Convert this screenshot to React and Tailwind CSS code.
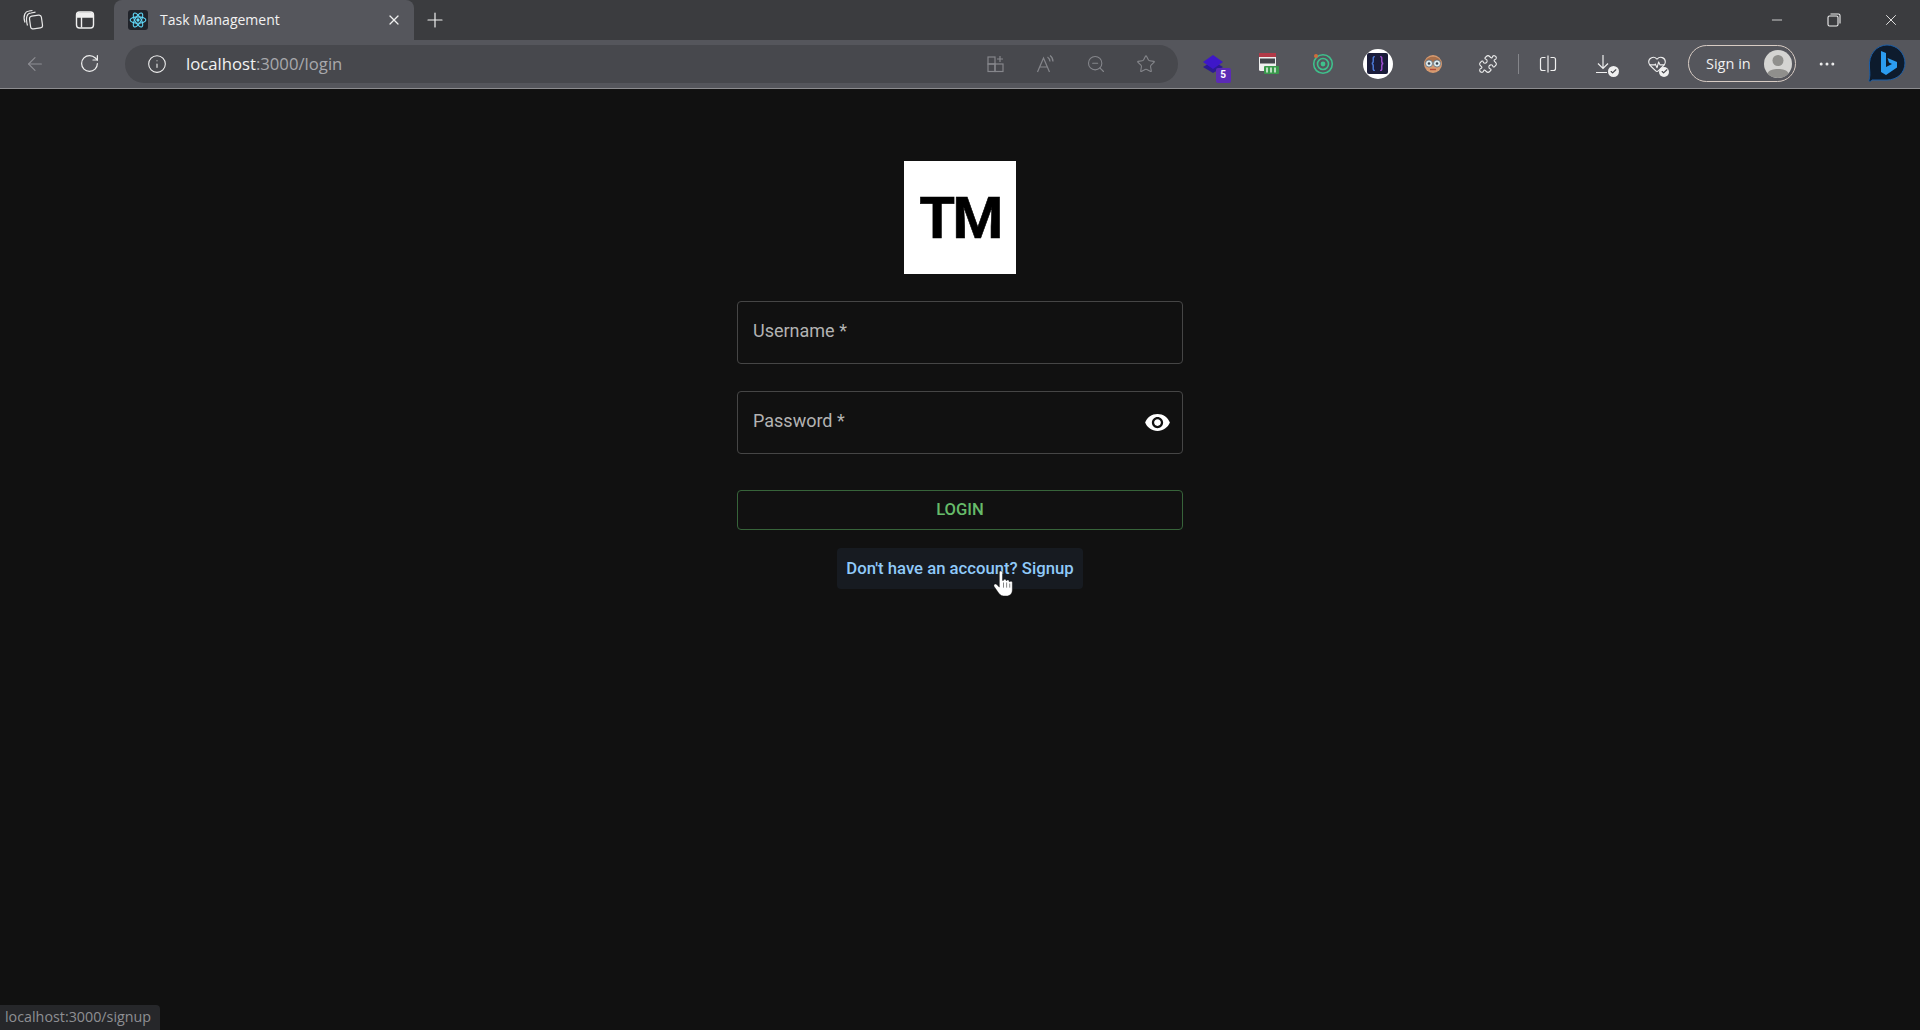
import {
  ArrowLeft, RotateCw, Info, Plus, X, Minus, Star, ZoomOut, Puzzle, HeartPulse, Ellipsis, Check,
} from 'lucide-react';

const roboto = { fontFamily: 'Roboto, sans-serif' };
const chromeFont = { fontFamily: '"Open Sans", "Noto Sans", sans-serif' };

function ReactIcon() {
  return (
    <div className="grid h-5 w-5 place-items-center rounded-[3px] bg-[#20232a]">
      <svg viewBox="-12 -12 24 24" className="h-[18px] w-[18px]" fill="none" stroke="#61dafb" strokeWidth="1.4">
        <circle r="2.2" fill="#61dafb" stroke="none" />
        <ellipse rx="10.5" ry="4.2" />
        <ellipse rx="10.5" ry="4.2" transform="rotate(60)" />
        <ellipse rx="10.5" ry="4.2" transform="rotate(120)" />
      </svg>
    </div>
  );
}

function CollectionsIcon() {
  return (
    <svg viewBox="0 0 22 22" className="h-[22px] w-[22px]" fill="none" stroke="#e8e8e8" strokeWidth="1.2" strokeLinejoin="round">
      <rect x="8" y="6.5" width="12" height="13" rx="2.5" transform="rotate(-8 14 13)" />
      <path d="M5.5 16.5 C4.5 13 4 10 5 7 C5.5 5.2 7 4.2 9 4 L13.5 3.2" />
      <path d="M3 13.5 C1.8 10.5 1.8 7.5 2.8 5 C3.6 3.2 5 2.2 7 2 L10.5 1.5" />
    </svg>
  );
}

function TabsIcon() {
  return (
    <svg viewBox="0 0 20 20" className="h-[20px] w-[20px]" fill="none" stroke="#efefef" strokeWidth="1.4">
      <rect x="1.5" y="2" width="17" height="16" rx="3" />
      <path d="M6.5 7v10.5M1.5 7h17" />
      <path d="M2 7 V4.5 C2 3 3 2.5 4 2.5 H16 C17 2.5 18 3 18 4.5 V7 Z" fill="#efefef" stroke="none" />
    </svg>
  );
}

function AppsAddIcon() {
  return (
    <svg viewBox="0 0 20 20" className="h-[20px] w-[20px]" fill="none" stroke="#85868b" strokeWidth="1.2">
      <rect x="2" y="3" width="7" height="7" />
      <rect x="2" y="10" width="7" height="7.5" />
      <rect x="9" y="10" width="8" height="7.5" />
      <path d="M14 2v6M11 5h6" />
    </svg>
  );
}

function ReadAloudIcon() {
  return (
    <svg viewBox="0 0 20 20" className="h-[20px] w-[20px]" fill="none" stroke="#85868b" strokeWidth="1.2">
      <path d="M1.5 18 L7.5 4 L13.5 18 M3.8 13h7.4" />
      <path d="M11.5 3 C13 4 13.8 5.5 14 7.5 M14 1.5 C16 3 17 5 17 7.5" />
    </svg>
  );
}

function SplitIcon() {
  return (
    <svg viewBox="0 0 20 20" className="h-5 w-5" fill="none" stroke="#efefef" strokeWidth="1.2">
      <path d="M7.5 3.5H4.5a2 2 0 0 0-2 2v9a2 2 0 0 0 2 2h3" />
      <path d="M12.5 3.5h3a2 2 0 0 1 2 2v9a2 2 0 0 1-2 2h-3" />
      <path d="M10 1.5v17" />
    </svg>
  );
}

function DownloadIcon() {
  return (
    <svg viewBox="0 0 20 20" className="h-5 w-5" fill="none" stroke="#efefef" strokeWidth="1.2">
      <path d="M9 1v13M4 9.5l5 5 5-5M2 18.5h11" />
    </svg>
  );
}

function ExtSlot({ children }) {
  return <div className="flex w-[55px] shrink-0 justify-center">{children}</div>;
}

function ExtensionIcons() {
  return (
    <>
      {/* purple stack extension with badge */}
      <ExtSlot>
        <div className="relative flex h-8 w-8 items-center justify-center">
          <svg viewBox="0 0 22 22" className="h-[22px] w-[22px]">
            <path d="M11 8 L21 14 L11 20 L1 14Z" fill="#2c1a94" />
            <path d="M11 2 L21 9 L11 16 L1 9Z" fill="#3e17c9" />
          </svg>
          <span className="absolute right-[-2px] bottom-[-3px] grid h-[15px] w-[15px] place-items-center rounded-[2px] bg-[#5b2bb5] text-[10px] leading-none font-bold text-white" style={roboto}>5</span>
        </div>
      </ExtSlot>
      {/* table extension */}
      <ExtSlot>
        <svg viewBox="0 0 22 24" className="h-6 w-[22px]">
          <rect x="2" y="1" width="17" height="18" rx="1.5" fill="#efefef" />
          <rect x="2" y="1" width="17" height="4" fill="#b13a48" />
          <rect x="3" y="6.5" width="15" height="5" fill="#44464c" />
          <rect x="7" y="14" width="15" height="8" rx="1" fill="#3a9a4c" />
          <path d="M10 15.5v5M14 15.5v5M18 15.5v5" stroke="#e8f5e8" strokeWidth="1.5" />
        </svg>
      </ExtSlot>
      {/* radar extension */}
      <ExtSlot>
        <svg viewBox="0 0 22 22" className="h-[22px] w-[22px]" fill="none">
          <circle cx="11" cy="11" r="9.3" stroke="#3fc08c" strokeWidth="1.6" />
          <circle cx="11" cy="11" r="5.5" stroke="#3fc08c" strokeWidth="1.6" />
          <circle cx="11" cy="11" r="2.4" fill="#3fc08c" />
          <circle cx="4" cy="3" r="2" fill="#cf6d3c" />
        </svg>
      </ExtSlot>
      {/* braces extension */}
      <ExtSlot>
        <div className="grid h-[30px] w-[30px] place-items-center rounded-full bg-white">
          <div className="grid h-[21px] w-[21px] place-items-center rounded-[2px] bg-[#1b1d3a]">
            <svg viewBox="0 0 16 16" className="h-[17px] w-[17px]" fill="none" strokeWidth="1.3">
              <path d="M5.5 1.5 C3.5 1.5 4 3 4 5.5 C4 7 3.5 8 2.5 8 C3.5 8 4 9 4 10.5 C4 13 3.5 14.5 5.5 14.5" stroke="#4f7fe0" />
              <path d="M10.5 1.5 C12.5 1.5 12 3 12 5.5 C12 7 12.5 8 13.5 8 C12.5 8 12 9 12 10.5 C12 13 12.5 14.5 10.5 14.5" stroke="#a44fd8" />
            </svg>
          </div>
        </div>
      </ExtSlot>
      {/* glasses face extension */}
      <ExtSlot>
        <svg viewBox="0 0 20 22" className="h-[22px] w-5">
          <circle cx="10" cy="11" r="9" fill="#d69a70" />
          <path d="M2 9 C4 2 16 2 18 9 Z" fill="#a86f4a" />
          <circle cx="6" cy="10.5" r="3.6" fill="#dcebf0" stroke="#5b6b78" strokeWidth="0.8" />
          <circle cx="14" cy="10.5" r="3.6" fill="#dcebf0" stroke="#5b6b78" strokeWidth="0.8" />
          <circle cx="6" cy="10.5" r="1.3" fill="#39424c" />
          <circle cx="14" cy="10.5" r="1.3" fill="#39424c" />
          <path d="M7 16.5h6" stroke="#b14a3a" strokeWidth="1.4" />
        </svg>
      </ExtSlot>
      <ExtSlot>
        <Puzzle className="h-5 w-5 text-[#efefef]" strokeWidth={1.3} />
      </ExtSlot>
    </>
  );
}

function CheckBadge({ className }) {
  return (
    <span className={`absolute grid place-items-center rounded-full bg-[#f0f0f0] ${className}`}>
      <Check className="h-[7px] w-[7px] text-[#45464b]" strokeWidth={4} />
    </span>
  );
}

function BingIcon() {
  return (
    <svg viewBox="0 0 40 40" className="h-[40px] w-[40px]">
      <path d="M20 1 C30 1 38 9 38 19 C38 29 30 36 20 36 H5 C3 38 2 38 2 36 C3 33 3 30 2.5 24 C1 10 10 1 20 1Z" fill="#0d1b2d" stroke="#1c5fa8" strokeWidth="1" />
      <path d="M14 7 L19 9 V23 L25 20 L22 18.5 L20.5 14 L30 18 V23.5 L19 31 L14 28Z" fill="#2b9cf0" />
    </svg>
  );
}

function BrowserChrome() {
  return (
    <header className="shrink-0" style={chromeFont}>
      <div className="flex h-10 items-end bg-[#3b3c3f]">
        <div className="flex h-10 w-[114px] shrink-0 items-center">
          <div className="ml-[22px]"><CollectionsIcon /></div>
          <div className="ml-[31px]"><TabsIcon /></div>
        </div>
        <div className="flex h-10 w-[300px] shrink-0 items-center rounded-t-lg bg-[#55565c] pl-[14px] pr-[12px]">
          <ReactIcon />
          <span className="ml-3 -mt-px flex-1 text-[14px] text-[#f2f2f2]">Task Management</span>
          <X className="h-4 w-4 text-[#f0f0f0]" strokeWidth={1.8} />
        </div>
        <div className="ml-px flex h-10 w-10 items-center justify-center">
          <Plus className="h-6 w-6 text-[#f0f0f0]" strokeWidth={1.2} />
        </div>
        <div className="flex-1" />
        <div className="flex h-10 items-center pr-[1px]">
          <div className="flex w-[57px] justify-center"><Minus className="h-4 w-4 text-[#f0f0f0]" strokeWidth={1.2} /></div>
          <div className="flex w-[57px] justify-center">
            <svg viewBox="0 0 14 14" className="h-[14px] w-[14px]" fill="none" stroke="#f0f0f0" strokeWidth="1.1">
              <rect x="1" y="3" width="10" height="10" rx="1.5" />
              <path d="M3.5 1 H11.5 C12.5 1 13 1.5 13 2.5 V10.5" />
            </svg>
          </div>
          <div className="flex w-[57px] justify-center"><X className="h-[18px] w-[18px] text-[#f0f0f0]" strokeWidth={1.2} /></div>
        </div>
      </div>
      <div className="flex h-[49px] items-center border-b border-b-[#8c8c8f] bg-[#55565c] pb-[1px]">
        <div className="flex w-[125px] shrink-0 items-center pl-6">
          <ArrowLeft className="h-[22px] w-[22px] text-[#8d8e93]" strokeWidth={1.2} />
          <RotateCw className="ml-[33px] h-[21px] w-[21px] text-[#efefef]" strokeWidth={1.4} />
        </div>
        <div className="flex h-[38px] w-[1053px] shrink-0 items-center rounded-full bg-[#47484d] pl-[22px] pr-[22px]">
          <Info className="h-[20px] w-[20px] text-[#f0f0f0]" strokeWidth={1.3} />
          <span className="ml-[19px] flex-1 text-[16.7px] text-[#f2f2f2]">
            localhost<span className="text-[#a8a8ac]">:3000/login</span>
          </span>
          <div className="flex items-center gap-[30px]">
            <AppsAddIcon />
            <ReadAloudIcon />
            <ZoomOut className="h-[20px] w-[20px] text-[#85868b]" strokeWidth={1.3} />
            <Star className="h-[20px] w-[20px] text-[#85868b]" strokeWidth={1.3} />
          </div>
        </div>
        <div className="ml-[7px] flex items-center">
          <ExtensionIcons />
        </div>
        <div className="ml-[3px] h-[20px] w-px bg-[#85868b]" />
        <div className="ml-[19px]"><SplitIcon /></div>
        <div className="relative ml-[36px]">
          <DownloadIcon />
          <CheckBadge className="right-[-5px] bottom-[-3px] h-[11px] w-[11px]" />
        </div>
        <div className="relative ml-[33px]">
          <HeartPulse className="h-5 w-5 text-[#efefef]" strokeWidth={1.3} />
          <CheckBadge className="right-[-2px] bottom-[-3px] h-[10px] w-[10px]" />
        </div>
        <div className="ml-[21px] flex h-[37px] w-[108px] items-center justify-between rounded-full border border-[#d8ccc4] pl-[17px] pr-[3px]">
          <span className="text-[14.5px] text-[#f0f0f0]">Sign in</span>
          <svg viewBox="0 0 28 28" className="h-[28px] w-[28px]">
            <circle cx="14" cy="14" r="14" fill="#d4d4d2" />
            <circle cx="14" cy="10.5" r="5.5" fill="#8f8f8c" />
            <path d="M3.5 23 C6 17.5 22 17.5 24.5 23 C21 29.5 7 29.5 3.5 23Z" fill="#8f8f8c" />
          </svg>
        </div>
        <Ellipsis className="ml-[21px] h-5 w-5 text-[#efefef]" strokeWidth={1.6} />
        <div className="ml-[30px]"><BingIcon /></div>
      </div>
    </header>
  );
}

function OutlinedField({ label, children }) {
  return (
    <div className="flex h-[63px] items-center justify-between rounded border border-[#464646] pl-[15px] pr-[11px]">
      <span className="-mt-[3px] text-[18px] leading-6 text-[#b3b3b3]" style={roboto}>{label} *</span>
      {children}
    </div>
  );
}

export default function App() {
  return (
    <div className="relative flex h-[1030px] w-full flex-col overflow-hidden bg-[#111111]">
      <BrowserChrome />

      <main className="flex flex-1 justify-center">
        <div className="flex w-[446px] flex-col pt-[72px]">
          <div className="flex h-[113px] w-[112px] items-center justify-center self-center bg-white">
            <span className="text-[58px] leading-none font-bold tracking-[-2.5px] text-black [-webkit-text-stroke:0.6px_black]" style={roboto}>TM</span>
          </div>
          <div className="mt-[27px]">
            <OutlinedField label="Username" />
          </div>
          <div className="mt-[27px]">
            <OutlinedField label="Password">
              <svg viewBox="0 0 24 24" className="h-[27px] w-[27px]" fill="#fff">
                <path d="M12 4.5C7 4.5 2.73 7.61 1 12c1.73 4.39 6 7.5 11 7.5s9.27-3.11 11-7.5c-1.73-4.39-6-7.5-11-7.5zM12 17c-2.76 0-5-2.24-5-5s2.24-5 5-5 5 2.24 5 5-2.24 5-5 5zm0-8c-1.66 0-3 1.34-3 3s1.34 3 3 3 3-1.34 3-3-1.34-3-3-3z" />
              </svg>
            </OutlinedField>
          </div>
          <button
            type="button"
            className="mt-[36px] h-[40px] rounded border border-[#37643a] text-[16.6px] font-medium text-[#66bb6a]"
            style={roboto}
          >
            LOGIN
          </button>
          <div className="relative mt-[18px] self-center">
            <button
              type="button"
              className="h-[41px] w-[246px] rounded bg-[#171b21] text-[16.7px] font-medium text-[#90caf9]"
              style={roboto}
            >
              Don't have an account? Signup
            </button>
            <svg viewBox="0 0 20 26" className="absolute left-[156px] top-[22px] h-[27px] w-[21px]">
              <path
                d="M6 2 C6 0.5 9 0.5 9 2 V10 L10 10 C10 8.5 12.5 8.5 12.5 10 L13 10.5 C13 9.2 15.5 9.2 15.5 11 L16 11.5 C16.2 10.5 18.5 10.5 18.5 12 V19 C18.5 23 16 25 13 25 H10 C7 25 6 23 4.5 21 L1 16 C0 14 2 12.5 3.5 14 L6 16.5Z"
                fill="#fff"
                stroke="#111"
                strokeWidth="0.4"
              />
              <path d="M10 12v5M13 12v5M16 13v4" stroke="#555" strokeWidth="0.7" />
            </svg>
          </div>
        </div>
      </main>

      <div
        className="absolute bottom-0 left-0 flex h-[25px] w-[160px] items-center rounded-tr bg-[#26272a] pb-px pl-[5px] text-[14.3px] text-[#8e8f93]"
        style={chromeFont}
      >
        localhost:3000/signup
      </div>
    </div>
  );
}
